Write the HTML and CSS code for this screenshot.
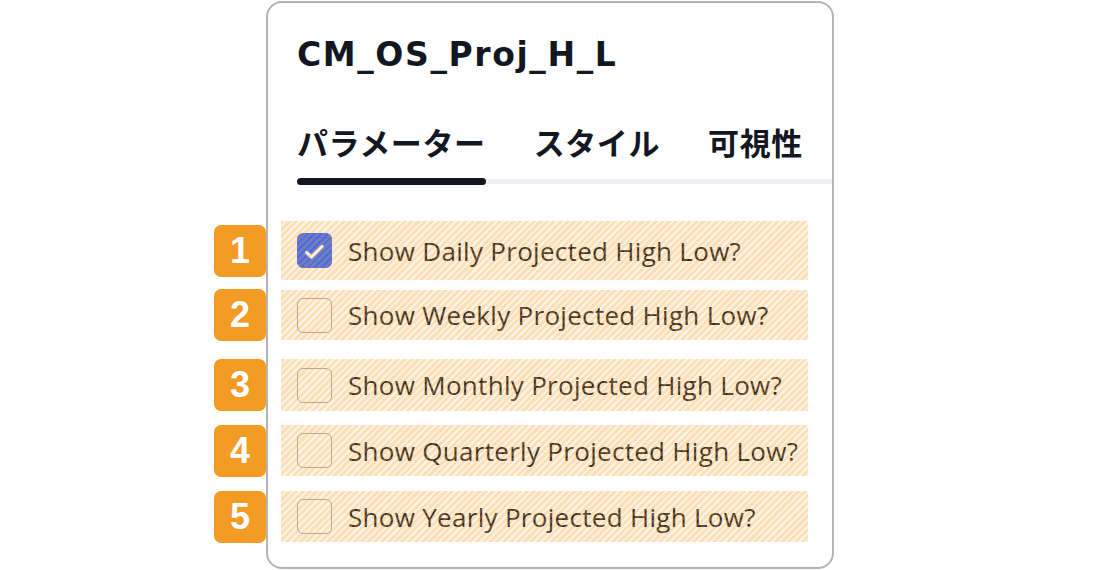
FILE: index.html
```html
<!DOCTYPE html>
<html lang="ja">
<head>
    <meta charset="UTF-8">
    <meta name="viewport" content="width=device-width, initial-scale=1.0">
    <title>CM_OS_Proj_H_L</title>
    <link rel="stylesheet" href="styles.css">
</head>
<body>
    <div class="dialog">
        <h1 class="title">CM_OS_Proj_H_L</h1>
        <div class="tabs">
            <div class="tab active">パラメーター</div>
            <div class="tab">スタイル</div>
            <div class="tab">可視性</div>
        </div>
        <div class="inputs">
            <label class="row row-1">
                <span class="badge">1</span>
                <input type="checkbox" checked>
                <span class="box">
                    <svg viewBox="0 0 35 35" width="35" height="35"><path d="M9.5 19.5 L14.5 24 L25 13.5" fill="none" stroke="#fff" stroke-width="3.2" stroke-linecap="round" stroke-linejoin="round"/></svg>
                </span>
                <span class="label">Show Daily Projected High Low?</span>
            </label>
            <label class="row row-2">
                <span class="badge">2</span>
                <input type="checkbox">
                <span class="box"></span>
                <span class="label">Show Weekly Projected High Low?</span>
            </label>
            <label class="row row-3">
                <span class="badge">3</span>
                <input type="checkbox">
                <span class="box"></span>
                <span class="label">Show Monthly Projected High Low?</span>
            </label>
            <label class="row row-4">
                <span class="badge">4</span>
                <input type="checkbox">
                <span class="box"></span>
                <span class="label">Show Quarterly Projected High Low?</span>
            </label>
            <label class="row row-5">
                <span class="badge">5</span>
                <input type="checkbox">
                <span class="box"></span>
                <span class="label">Show Yearly Projected High Low?</span>
            </label>
        </div>
    </div>
</body>
</html>
```

FILE: styles.css
```css
body {
    margin: 0;
    padding-top: 1px;
    background-color: #ffffff;
    font-family: 'Open Sans', 'Noto Sans CJK JP', sans-serif;
    color: #131722;
}
.dialog {
    box-sizing: border-box;
    width: 568px;
    height: 568px;
    margin: 0 auto;
    padding: 0 24px 0 29px;
    border: 2px solid #b4b4b4;
    border-radius: 16px;
    background-color: #ffffff;
}
.title {
    margin: 0;
    padding-top: 30px;
    font-family: 'DejaVu Sans', sans-serif;
    font-size: 33px;
    font-weight: 700;
    line-height: 44px;
    letter-spacing: 1.6px;
}
.tabs {
    display: flex;
    gap: 48px;
    margin: 45px -24px 0 0;
    border-bottom: 5px solid #eef0f5;
}
.tab {
    position: relative;
    padding-bottom: 17px;
    font-family: 'Noto Sans CJK JP', sans-serif;
    font-size: 31px;
    font-weight: 700;
    line-height: 40px;
    letter-spacing: 0.6px;
}
.tab.active:after {
    content: "";
    position: absolute;
    left: 0;
    right: 0;
    bottom: -6px;
    height: 7px;
    border-radius: 4px;
    background-color: #131722;
}
.inputs {
    display: flex;
    flex-direction: column;
    margin: 37px 0 0 -16px;
}
.row {
    position: relative;
    display: flex;
    align-items: center;
    height: 51px;
    padding-left: 16px;
}
.row:after {
    content: "";
    position: absolute;
    left: 0;
    top: 0;
    right: 0;
    bottom: 0;
    background: repeating-linear-gradient(135deg,
        rgba(249, 170, 64, 0.36) 0 3px,
        rgba(249, 170, 64, 0.14) 3px 4.8px);
    pointer-events: none;
}
.row-1 {
    height: 59px;
}
.row-2 {
    height: 50px;
    margin-top: 10px;
}
.row-3 {
    height: 52px;
    margin-top: 19px;
}
.row-4 {
    margin-top: 14px;
}
.row-5 {
    margin-top: 15px;
}
.row input {
    display: none;
}
.box {
    box-sizing: border-box;
    width: 35px;
    height: 35px;
    flex-shrink: 0;
    border: 1.5px solid #a3a6b0;
    border-radius: 6px;
    background-color: #ffffff;
}
.box svg {
    display: block;
    margin: -1.5px;
}
.row input:checked + .box {
    border-color: #2962ff;
    background-color: #2962ff;
}
.label {
    margin-left: 16px;
    font-size: 26px;
    line-height: 32px;
    letter-spacing: 0.3px;
    color: #131722;
    white-space: nowrap;
}
.badge {
    position: absolute;
    left: -67px;
    top: 50%;
    z-index: 2;
    width: 52px;
    height: 52px;
    margin-top: -26px;
    border-radius: 7px;
    background-color: #f29b25;
    color: #ffffff;
    font-family: 'Liberation Sans', Arial, sans-serif;
    font-size: 36px;
    font-weight: 700;
    line-height: 52px;
    text-align: center;
}
```
